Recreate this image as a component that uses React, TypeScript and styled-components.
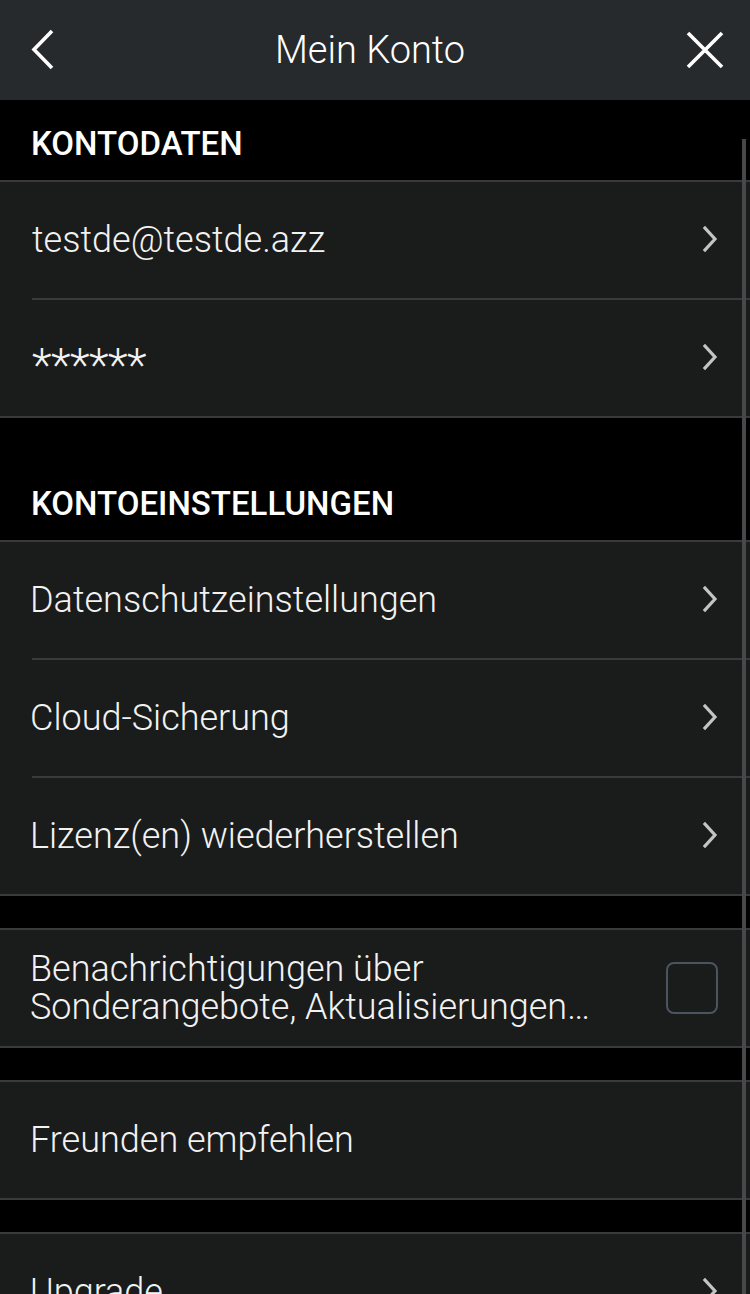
import React from 'react';

import styled, { createGlobalStyle } from 'styled-components';

const GlobalStyle = createGlobalStyle`
  html, body {
    margin: 0;
    padding: 0;
    background: #000;
  }

  * {
    box-sizing: border-box;
  }
`;

const Screen = styled.div`
  position: relative;
  width: 750px;
  height: 100vh;
  overflow: hidden;
  background: #000;
  font-family: Roboto, 'Noto Sans', sans-serif;
  color: #f2f2f2;
`;

const TopBar = styled.header`
  display: flex;
  align-items: center;
  justify-content: space-between;
  height: 100px;
  padding: 0 24px 0 22px;
  background: #272a2c;
`;

const TopTitle = styled.h1`
  margin: 0 8px 0 0;
  font-size: 38px;
  font-weight: 300;
  color: #ffffff;
`;

const IconButton = styled.button`
  display: flex;
  align-items: center;
  justify-content: center;
  width: 42px;
  height: 48px;
  padding: 0;
  border: none;
  background: transparent;
  cursor: pointer;
`;

const SectionTitle = styled.h2<{ $spaced?: boolean }>`
  display: flex;
  align-items: flex-end;
  height: 80px;
  margin: ${(props) => (props.$spaced ? '42px' : '0')} 0 0 0;
  padding: 0 31px 20px 31px;
  font-size: 33px;
  font-weight: 500;
  line-height: 1;
  color: #ffffff;
`;

const Group = styled.section<{ $gap?: boolean }>`
  margin-top: ${(props) => (props.$gap ? '32px' : '0')};
  border-top: 2px solid #3a3a3c;
  border-bottom: 2px solid #3a3a3c;
  background: #1a1b1b;
`;

const Row = styled.div`
  display: flex;
  align-items: center;
  justify-content: space-between;
  height: 116px;
  padding: 0 30px 0 30px;
`;

const Divider = styled.div`
  height: 2px;
  margin-left: 32px;
  background: #3a3a3c;
`;

const RowLabel = styled.span<{ $indent?: number }>`
  padding-left: ${(props) => props.$indent ?? 0}px;
  font-size: 36px;
  font-weight: 300;
  color: #f2f2f2;
  white-space: nowrap;
`;

const Masked = styled.span`
  padding: 14px 0 0 2px;
  font-size: 46px;
  font-weight: 300;
  line-height: 1;
  color: #f2f2f2;
  letter-spacing: -0.5px;
`;

const WrapLabel = styled.span`
  max-width: 610px;
  font-size: 36px;
  font-weight: 300;
  line-height: 38px;
  color: #f2f2f2;
`;

const Checkbox = styled.span`
  flex: none;
  width: 52px;
  height: 52px;
  margin-right: 2px;
  border: 2px solid #4b5560;
  border-radius: 8px;
`;

const ScrollThumb = styled.div`
  position: absolute;
  top: 139px;
  right: 4px;
  bottom: 0;
  width: 4px;
  background: #48484a;
`;

function Chevron() {
  return (
    <svg width="20" height="30" viewBox="0 0 20 30" fill="none">
      <path d="M5 3 L15 14 L5 25" stroke="#c4c4c4" strokeWidth="3.2" strokeLinecap="square" />
    </svg>
  );
}

interface NavRowProps {
  label: string;
  indent?: number;
  arrow?: boolean;
}

function NavRow({ label, indent, arrow = true }: NavRowProps) {
  return (
    <Row>
      <RowLabel $indent={indent}>{label}</RowLabel>
      {arrow && <Chevron />}
    </Row>
  );
}

export default function App() {
  return (
    <Screen>
      <GlobalStyle />
      <TopBar>
        <IconButton type="button" aria-label="Zurück">
          <svg width="30" height="42" viewBox="0 0 30 42" fill="none">
            <path d="M24 2 L6 20.5 L24 39" stroke="#ffffff" strokeWidth="3.6" />
          </svg>
        </IconButton>
        <TopTitle>Mein Konto</TopTitle>
        <IconButton type="button" aria-label="Schließen">
          <svg width="40" height="40" viewBox="0 0 40 40" fill="none">
            <path d="M3 3 L37 37 M37 3 L3 37" stroke="#ffffff" strokeWidth="3.6" />
          </svg>
        </IconButton>
      </TopBar>

      <SectionTitle>KONTODATEN</SectionTitle>
      <Group>
        <NavRow label="testde@testde.azz" indent={2} />
        <Divider />
        <Row>
          <Masked>******</Masked>
          <Chevron />
        </Row>
      </Group>

      <SectionTitle $spaced>KONTOEINSTELLUNGEN</SectionTitle>
      <Group>
        <NavRow label="Datenschutzeinstellungen" />
        <Divider />
        <NavRow label="Cloud-Sicherung" />
        <Divider />
        <NavRow label="Lizenz(en) wiederherstellen" />
      </Group>

      <Group $gap>
        <Row>
          <WrapLabel>Benachrichtigungen über Sonderangebote, Aktualisierungen…</WrapLabel>
          <Checkbox />
        </Row>
      </Group>

      <Group $gap>
        <NavRow label="Freunden empfehlen" arrow={false} />
      </Group>

      <Group $gap>
        <NavRow label="Upgrade" />
      </Group>

      <ScrollThumb />
    </Screen>
  );
}
